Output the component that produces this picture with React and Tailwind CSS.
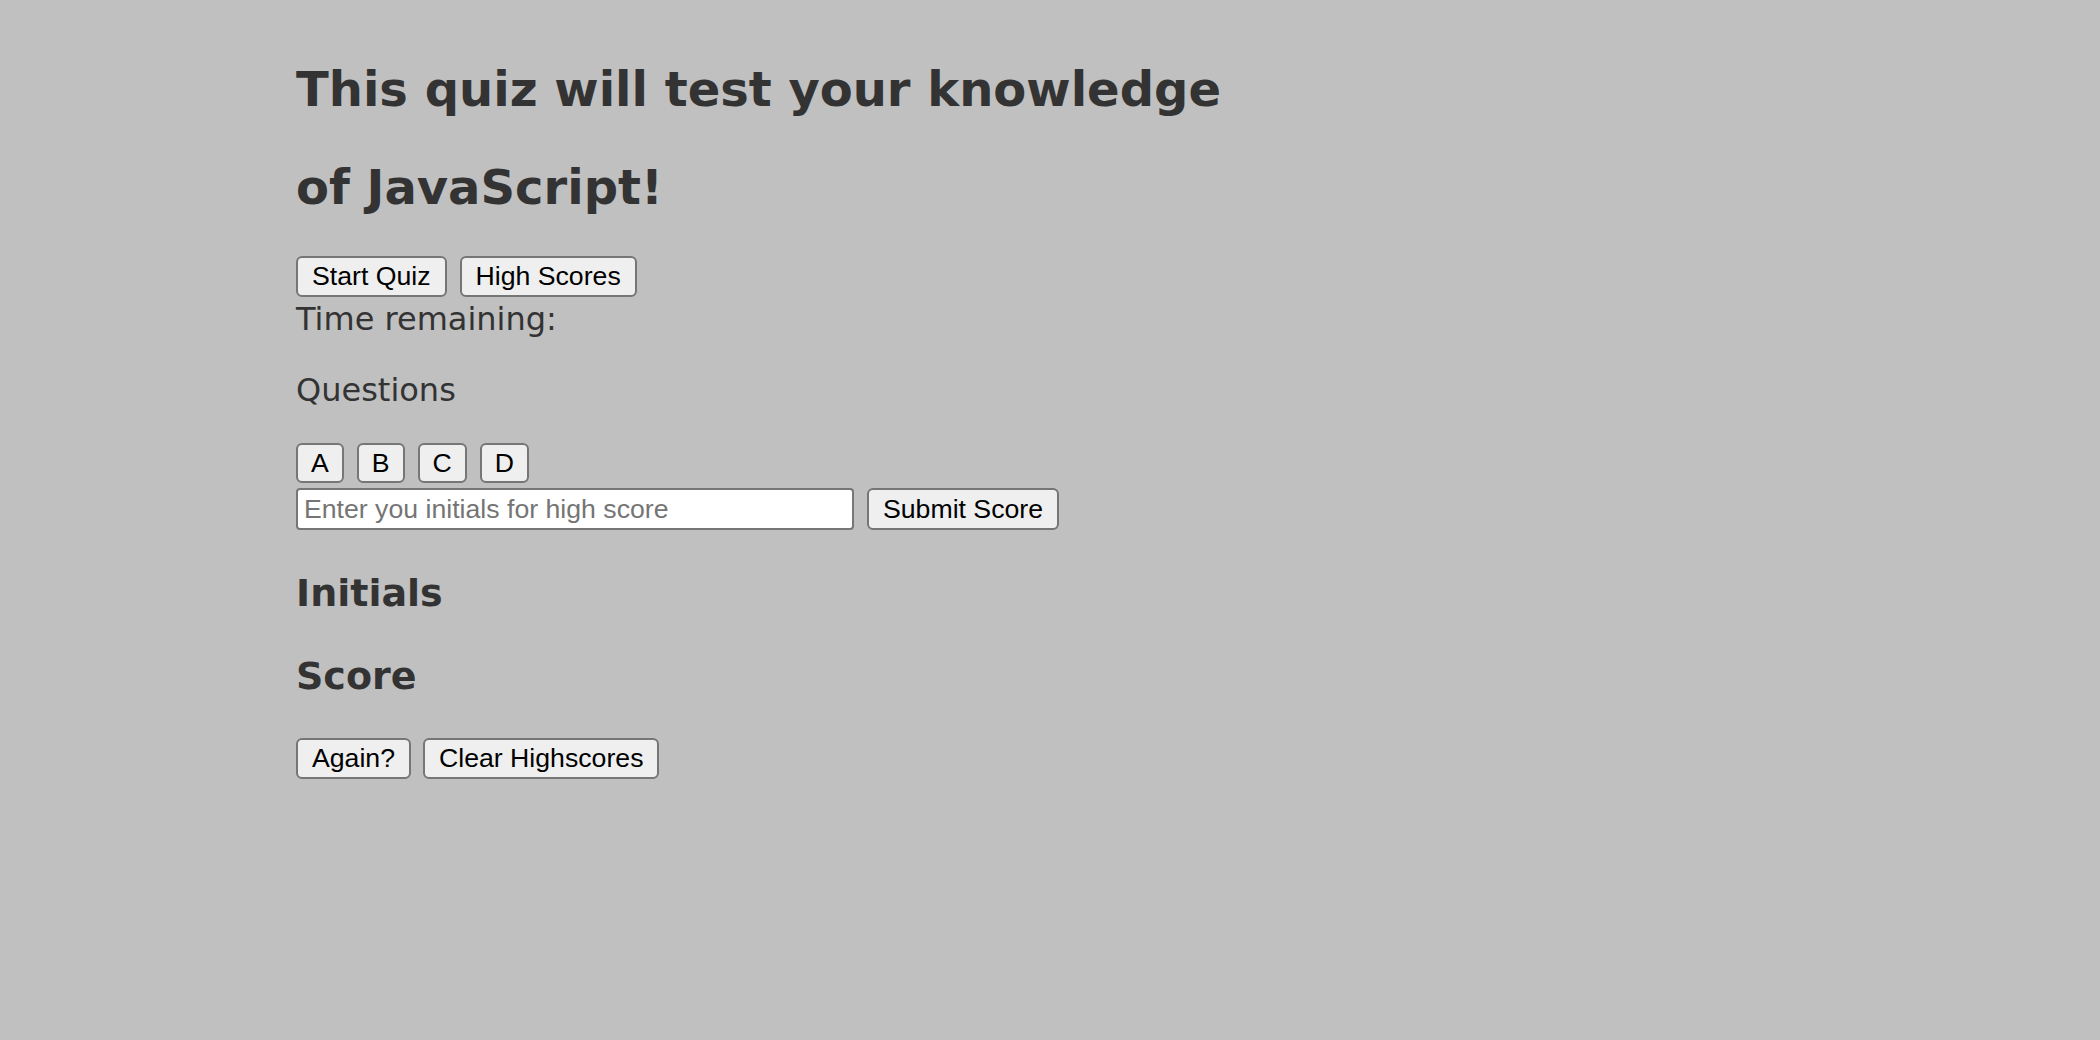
import { useState } from 'react'

const btn =
  'h-[41px] px-[14px] bg-[#efefef] border-2 border-[#767676] rounded-[6px] text-black text-[26.67px] leading-none font-["Liberation_Sans",Arial,sans-serif]'

function Btn({ children, onClick }) {
  return (
    <button type="button" className={btn} onClick={onClick}>
      {children}
    </button>
  )
}

export default function App() {
  const [initials, setInitials] = useState('')

  return (
    <div className='min-h-screen bg-[#c0c0c0] text-[#333333] font-["DejaVu_Sans",Verdana,sans-serif]'>
      <div className="pl-[296px] pt-[40px] pb-10 flex flex-col items-start">
        {/* Intro */}
        <h1 className="text-[48px] leading-[98px] font-bold">
          This quiz will test your knowledge
          <br />
          of JavaScript!
        </h1>

        <div className="mt-[20px] flex gap-[13px]">
          <Btn>Start Quiz</Btn>
          <Btn>High Scores</Btn>
        </div>

        <div className="mt-[4px] text-[32px] leading-[37px]">Time remaining:</div>

        {/* Question */}
        <p className="mt-[34px] text-[32px] leading-[37px]">Questions</p>

        <div className="mt-[34px] flex gap-[13px]">
          {['A', 'B', 'C', 'D'].map(l => (
            <button
              key={l}
              type="button"
              className='h-[40px] px-[13px] bg-[#efefef] border-2 border-[#767676] rounded-[6px] text-black text-[26.67px] leading-none font-["Liberation_Sans",Arial,sans-serif]'
            >
              {l}
            </button>
          ))}
        </div>

        {/* Score entry */}
        <div className="mt-[5px] flex gap-[13px]">
          <input
            value={initials}
            onChange={e => setInitials(e.target.value)}
            placeholder="Enter you initials for high score"
            className='w-[558px] h-[42px] px-[6px] bg-white border-2 border-[#767676] rounded-[4px] text-black text-[26.67px] placeholder:text-[#757575] font-["Liberation_Sans",Arial,sans-serif] outline-none'
          />
          <button type="button" className={btn + ' h-[42px]'}>
            Submit Score
          </button>
        </div>

        {/* High scores */}
        <h3 className="mt-[41px] text-[38px] leading-[44px] font-bold">Initials</h3>
        <h3 className="mt-[39px] text-[38px] leading-[44px] font-bold">Score</h3>

        <div className="mt-[40px] flex gap-[12px]">
          <Btn>Again?</Btn>
          <Btn>Clear Highscores</Btn>
        </div>
      </div>
    </div>
  )
}
